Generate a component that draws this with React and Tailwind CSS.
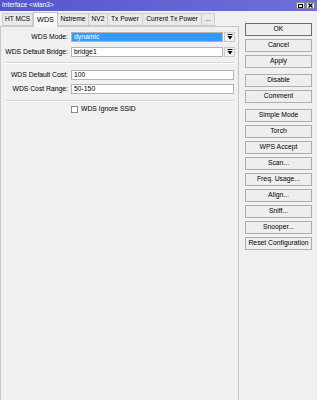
import React from "react";

const font = { fontFamily: '"Liberation Sans", Arial, sans-serif' };

function Arrow() {
  return (
    <div className="w-[11px] h-[10px] bg-[#f0f0f0] border border-[#c8c8c8] flex items-center justify-center">
      <svg width="6" height="6" viewBox="0 0 6 6">
        <rect x="0.5" y="0" width="5" height="1" fill="#000" />
        <path d="M0.5 2 L5.5 2 L3 5.5 Z" fill="#000" />
      </svg>
    </div>
  );
}

function Row({ label, value, selected, arrow, mt }) {
  return (
    <div className={`flex items-center h-[10px] ${mt}`}>
      <div className="w-[68px] text-right pr-[1px] text-[6.8px] leading-none text-black whitespace-nowrap">{label}</div>
      <div className="ml-[2px] flex gap-[1px]">
        <div
          className={`${arrow ? "w-[152px]" : "w-[163px]"} h-[10px] border border-[#b4b4b4] ${
            selected ? "bg-[#3399ff] text-white" : "bg-white text-black"
          } text-[6.8px] leading-none flex items-center pl-[2px]`}
        >
          {value}
        </div>
        {arrow && <Arrow />}
      </div>
    </div>
  );
}

function Sep({ mt }) {
  return (
    <div className={`${mt} ml-[5px] w-[228px] h-[2px] flex flex-col`}>
      <div className="h-[1px] bg-[#d4d4d4]" />
      <div className="h-[1px] bg-white" />
    </div>
  );
}

function Btn({ children, ok, mt = "mt-[3px]" }) {
  return (
    <div
      className={`${mt} h-[13px] w-[67px] border ${
        ok ? "border-[#6e6e6e]" : "border-[#adadad]"
      } bg-[#eeeeee] flex items-center justify-center text-[6.8px] leading-none text-black whitespace-nowrap`}
    >
      {children}
    </div>
  );
}

const tabs = [
  ["HT MCS", "w-[31px]"],
  ["WDS", "w-[25px]"],
  ["Nstreme", "w-[31px]"],
  ["NV2", "w-[19px]"],
  ["Tx Power", "w-[35px]"],
  ["Current Tx Power", "w-[59px]"],
  ["...", "w-[13px]"],
];

export default function App() {
  return (
    <div className="w-[317px] h-[400px] bg-[#f0f0f0] flex flex-col overflow-hidden" style={font}>
      <div className="h-[11px] bg-gradient-to-r from-[#5656cc] to-[#6e6edb] flex items-center justify-between pl-[2px] pr-[2px]">
        <span className="text-white text-[6.5px] leading-none">Interface &lt;wlan3&gt;</span>
        <div className="flex gap-[1px]">
          <div className="w-[9px] h-[7px] bg-[#e8e8e8] border border-[#888] flex items-center justify-center">
            <div className="w-[5px] h-[4px] border border-black" />
          </div>
          <div className="w-[9px] h-[7px] bg-[#e8e8e8] border border-[#888] flex items-center justify-center">
            <svg width="5" height="5" viewBox="0 0 5 5">
              <path d="M0.5 0.5 L4.5 4.5 M4.5 0.5 L0.5 4.5" stroke="#000" strokeWidth="1.2" />
            </svg>
          </div>
        </div>
      </div>
      <div className="flex flex-1">
        <div className="w-[239px] flex flex-col">
          <div className="h-[15px] flex items-end pl-[2px] relative z-10">
            {tabs.map(([t, w]) =>
              t === "WDS" ? (
                <div
                  key={t}
                  className={`${w} h-[15px] -mb-[1px] bg-[#f7f7f7] border border-b-0 border-[#c2c2c2] flex items-center justify-center text-[7.2px] leading-none text-black`}
                >
                  {t}
                </div>
              ) : (
                <div
                  key={t}
                  className={`${w} h-[13px] bg-[#e9e9e9] border border-l-0 first:border-l border-[#cdcdcd] flex items-center justify-center text-[6.6px] leading-none text-black whitespace-nowrap`}
                >
                  {t}
                </div>
              )
            )}
          </div>
          <div className="flex-1 border-t border-l border-r border-[#c8c8c8] bg-[#f0f0f0] flex flex-col">
            <Row label="WDS Mode:" value="dynamic" selected arrow mt="mt-[5px]" />
            <Row label="WDS Default Bridge:" value="bridge1" arrow mt="mt-[5px]" />
            <Sep mt="mt-[5px]" />
            <Row label="WDS Default Cost:" value="100" mt="mt-[6px]" />
            <Row label="WDS Cost Range:" value="50-150" mt="mt-[4px]" />
            <Sep mt="mt-[6px]" />
            <div className="mt-[4px] flex items-center h-[7px] pl-[70px]">
              <div className="w-[7px] h-[7px] bg-white border border-[#8a8a8a]" />
              <span className="ml-[3px] text-[6.8px] leading-none text-black">WDS Ignore SSID</span>
            </div>
          </div>
        </div>
        <div className="flex-1 pl-[6px] pt-[12px] flex flex-col">
          <Btn ok mt="mt-0">OK</Btn>
          <Btn>Cancel</Btn>
          <Btn>Apply</Btn>
          <Btn mt="mt-[6px]">Disable</Btn>
          <Btn>Comment</Btn>
          <Btn mt="mt-[6px]">Simple Mode</Btn>
          <Btn>Torch</Btn>
          <Btn>WPS Accept</Btn>
          <Btn>Scan...</Btn>
          <Btn>Freq. Usage...</Btn>
          <Btn>Align...</Btn>
          <Btn>Sniff...</Btn>
          <Btn>Snooper...</Btn>
          <Btn>Reset Configuration</Btn>
        </div>
      </div>
    </div>
  );
}
